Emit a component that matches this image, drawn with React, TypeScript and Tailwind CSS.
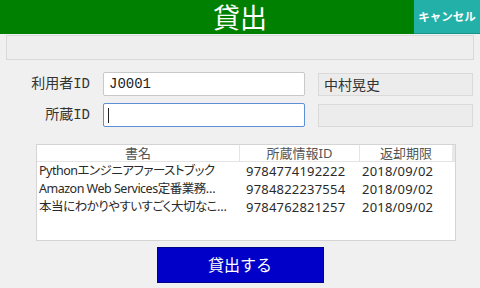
import React from 'react'

const jp = "font-['Noto_Sans','Noto_Sans_CJK_JP',sans-serif]"
const mono = "font-['Liberation_Mono','Noto_Sans_CJK_JP',monospace]"

const rows = [
  { title: 'Pythonエンジニアファーストブック', id: '9784774192222', due: '2018/09/02' },
  { title: 'Amazon Web Services定番業務…', id: '9784822237554', due: '2018/09/02' },
  { title: '本当にわかりやすいすごく大切なこ…', id: '9784762821257', due: '2018/09/02' },
]

function App() {
  return (
    <div className={`w-[480px] h-[288px] bg-[#f0f0f0] overflow-hidden ${jp}`}>
      <header className="grid grid-cols-[66px_1fr_66px] h-[34px] bg-[#008000]">
        <div />
        <h1 className="flex items-center justify-center text-[27px] leading-none text-white">貸出</h1>
        <button className="bg-[#22b0a8] border-b border-[#1a918a] text-white text-[11.5px] font-bold">キャンセル</button>
      </header>

      <div className="mx-[6px] mt-[1px] h-[25px] border border-[#d9d9d9] bg-[#eeeeee]" />

      <div className="mt-[12px] flex items-center">
        <label className={`w-[90px] text-right text-[14px] text-[#333] ${mono}`}>利用者ID</label>
        <div className={`ml-[13px] w-[202px] h-[24px] bg-white border border-[#c8c8c8] rounded-[2px] flex items-center pl-[5px] text-[14px] text-[#222] ${mono}`}>
          J0001
        </div>
        <div className="ml-[13px] w-[155px] h-[23px] bg-[#ececec] border border-[#dadada] flex items-center pl-[5px] text-[14px] text-[#333]">
          中村晃史
        </div>
      </div>

      <div className="mt-[7px] flex items-center">
        <label className={`w-[90px] text-right text-[14px] text-[#333] ${mono}`}>所蔵ID</label>
        <div className="ml-[13px] w-[202px] h-[24px] bg-white border border-[#5b8fd6] rounded-[2px] flex items-center pl-[4px]">
          <span className="w-px h-[15px] bg-[#222]" />
        </div>
        <div className="ml-[13px] w-[155px] h-[23px] bg-[#ececec] border border-[#dadada]" />
      </div>

      <div className="mt-[17px] ml-[36px] w-[420px] h-[97px] bg-white border border-[#d4d4d4] text-[13px] [font-feature-settings:'palt']">
        <div className="flex h-[17px] border-b border-[#e4e4e4] text-[#555] leading-[17px]">
          <div className="w-[203px] text-center border-r border-[#e4e4e4]">書名</div>
          <div className="w-[120px] text-center border-r border-[#e4e4e4]">所蔵情報ID</div>
          <div className="w-[92px] text-center bg-white">返却期限</div>
          <div className="flex-1 bg-[#e8e8e8]" />
        </div>
        {rows.map((r) => (
          <div key={r.id} className="flex h-[18px] leading-[18px] text-[#2a2a2a]">
            <div className="w-[203px] pl-[2px] whitespace-nowrap overflow-hidden text-[12.5px] tracking-[-0.5px]">{r.title}</div>
            <div className="w-[120px] pl-[6px] tracking-[0.2px]">{r.id}</div>
            <div className="w-[92px] pl-[2px] tracking-[0.2px]">{r.due}</div>
          </div>
        ))}
      </div>

      <div className="mt-[6px] flex justify-center">
        <button className="w-[167px] h-[36px] bg-[#0000c8] border border-[#00008a] text-white text-[16px]">貸出する</button>
      </div>
    </div>
  )
}

export default App
